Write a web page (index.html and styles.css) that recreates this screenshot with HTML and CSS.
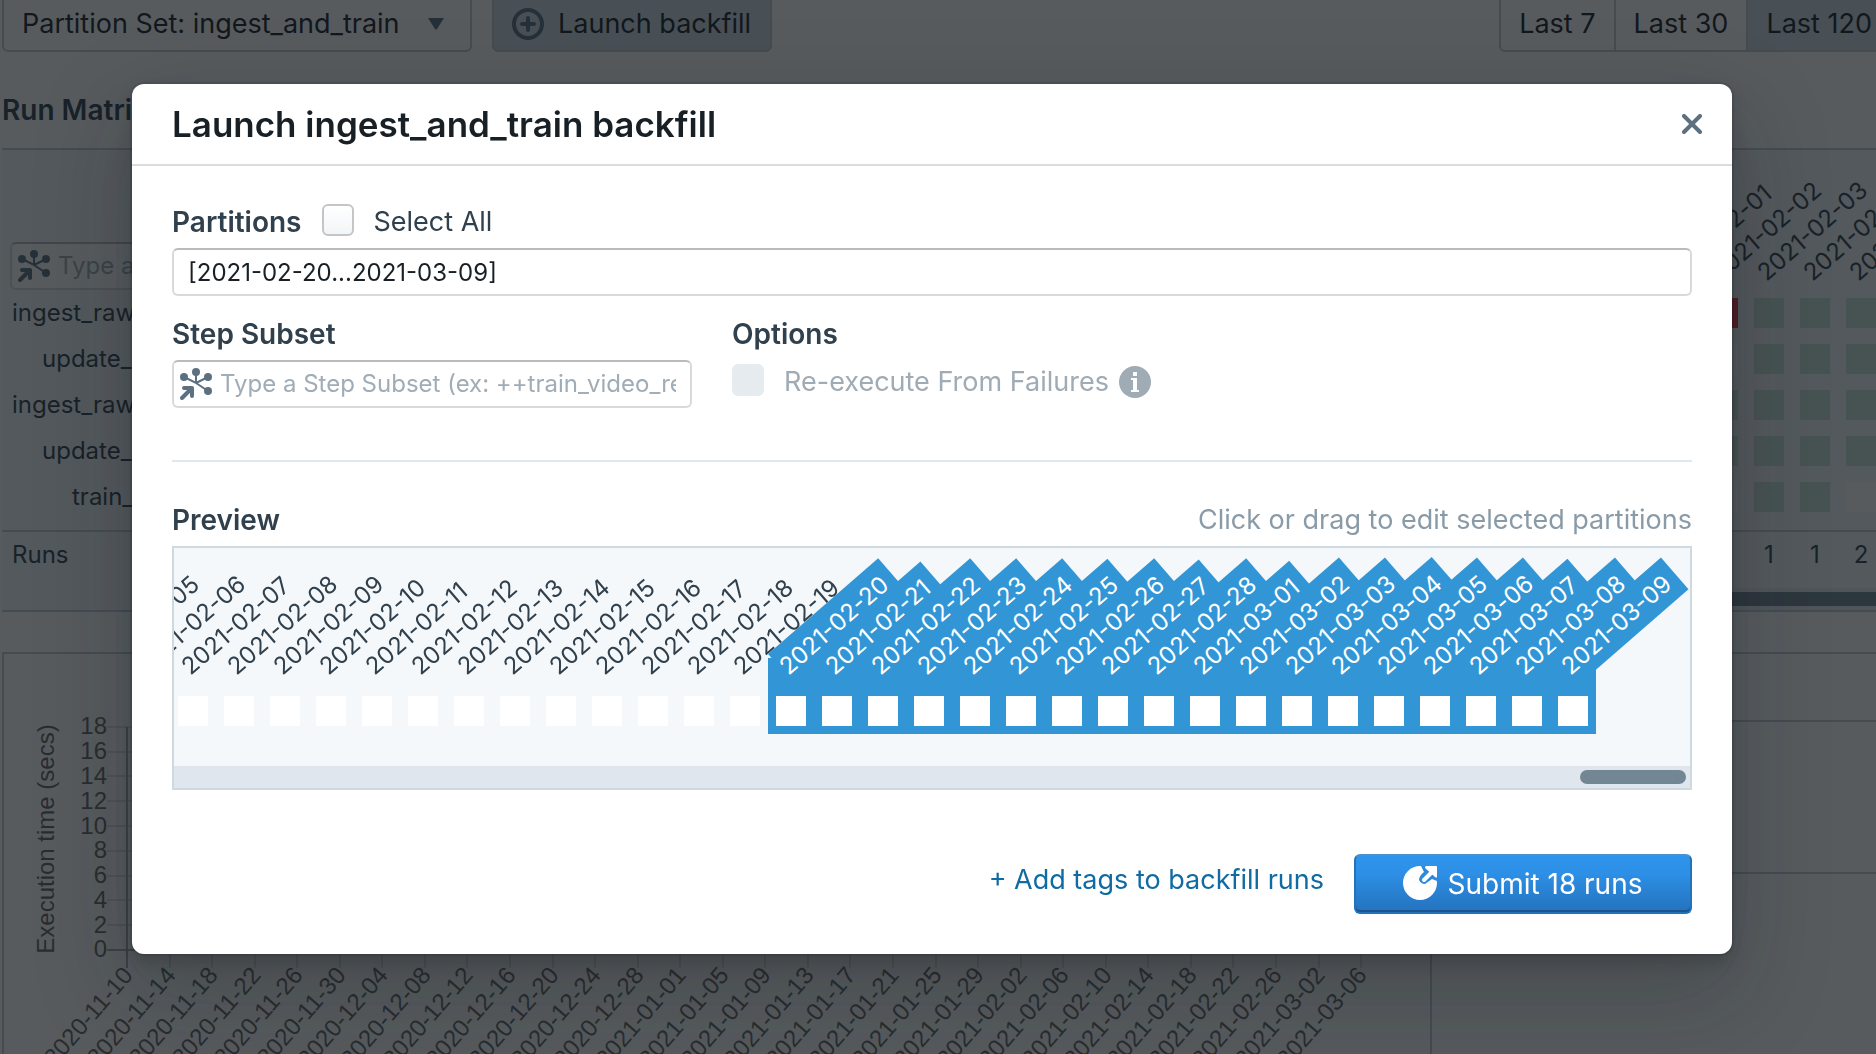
FILE: index.html
```html
<!DOCTYPE html>
<html lang="en">
<head>
<meta charset="utf-8">
<title>Launch ingest_and_train backfill</title>
<link rel="stylesheet" href="styles.css">
</head>
<body>
<main class="page">
  <div class="toolbar">
    <button class="btn btn-select" type="button">Partition Set: ingest_and_train
      <svg width="16" height="12" viewBox="0 0 16 12"><path d="M0 0h16L9 11q-1 1-2 0z" fill="#5c7080"/></svg>
    </button>
    <button class="btn btn-launch active" type="button">
      <svg width="32" height="32" viewBox="0 0 32 32" fill="none" stroke="#5c7080" stroke-width="4"><circle cx="16" cy="16" r="14"/><path d="M16 10v12M10 16h12" stroke-linecap="round"/></svg>
      Launch backfill
    </button>
    <div class="range">
      <button class="btn" type="button">Last 7</button>
      <button class="btn" type="button">Last 30</button>
      <button class="btn active" type="button">Last 120</button>
    </div>
  </div>

  <h2 class="section-title">Run Matrix</h2>
  <section class="matrix">
    <div class="matrix-body">
      <div class="steps">
        <label class="step-input">
          <svg class="op-icon" width="32" height="32" viewBox="0 0 32 32"><use href="#op"/></svg>
          <input type="text" placeholder="Type a Step Subset" aria-label="Step subset">
        </label>
        <div class="step">ingest_raw</div>
        <div class="step indent-1">update_</div>
        <div class="step">ingest_raw</div>
        <div class="step indent-1">update_</div>
        <div class="step indent-2">train_</div>
      </div>
      <div class="columns">
        <div class="column"><span class="tilt">2021-02-01</span><i class="cell ok"></i><i class="cell ok"></i><i class="cell ok"></i><i class="cell ok"></i><i class="cell ok"></i></div>
        <div class="column"><span class="tilt">2021-02-02</span><i class="cell fail"></i><i class="cell"></i><i class="cell ok"></i><i class="cell ok"></i><i class="cell"></i></div>
        <div class="column"><span class="tilt">2021-02-03</span><i class="cell ok"></i><i class="cell ok"></i><i class="cell ok"></i><i class="cell ok"></i><i class="cell ok"></i></div>
        <div class="column"><span class="tilt">2021-02-04</span><i class="cell ok"></i><i class="cell ok"></i><i class="cell ok"></i><i class="cell ok"></i><i class="cell ok"></i></div>
        <div class="column"><span class="tilt">2021-02-05</span><i class="cell ok"></i><i class="cell ok"></i><i class="cell ok"></i><i class="cell ok"></i><i class="cell"></i></div>
      </div>
    </div>
    <div class="matrix-runs">
      <div class="runs-label">Runs</div>
      <div class="run-counts"><span>1</span><span>1</span><span>2</span></div>
    </div>
    <div class="matrix-scroll"><div class="matrix-thumb"></div></div>
  </section>

  <section class="lower">
    <div class="chart">
      <svg width="1428" height="400" viewBox="0 0 1428 400">
        <g stroke="#e0e0e0" stroke-width="2">
          <path d="M103 73H1384M103 98H1384M103 122H1384M103 147H1384M103 172H1384M103 197H1384M103 222H1384M103 246H1384M103 271H1384"/>
          <path d="M166 73V314M208 73V314M251 73V314M293 73V314M336 73V314M378 73V314M421 73V314M463 73V314M506 73V314M549 73V314M591 73V314M634 73V314M676 73V314M719 73V314M761 73V314M804 73V314M846 73V314M889 73V314M932 73V314M974 73V314M1017 73V314M1059 73V314M1102 73V314M1144 73V314M1187 73V314M1229 73V314M1272 73V314M1315 73V314M1357 73V314"/>
        </g>
        <path d="M123 73V314M103 296H1384" stroke="#aaa" stroke-width="2"/>
        <text class="axis" text-anchor="middle" transform="translate(50 185) rotate(-90)">Execution time (secs)</text>
        <g class="axis" text-anchor="end">
          <text x="103" y="80">18</text><text x="103" y="105">16</text><text x="103" y="130">14</text><text x="103" y="155">12</text><text x="103" y="180">10</text><text x="103" y="204">8</text><text x="103" y="229">6</text><text x="103" y="254">4</text><text x="103" y="279">2</text><text x="103" y="303">0</text>
        </g>
        <g class="axis" text-anchor="end">
          <text transform="translate(130 322) rotate(-49)">2020-11-10</text>
          <text transform="translate(173 322) rotate(-49)">2020-11-14</text>
          <text transform="translate(215 322) rotate(-49)">2020-11-18</text>
          <text transform="translate(258 322) rotate(-49)">2020-11-22</text>
          <text transform="translate(300 322) rotate(-49)">2020-11-26</text>
          <text transform="translate(343 322) rotate(-49)">2020-11-30</text>
          <text transform="translate(385 322) rotate(-49)">2020-12-04</text>
          <text transform="translate(428 322) rotate(-49)">2020-12-08</text>
          <text transform="translate(470 322) rotate(-49)">2020-12-12</text>
          <text transform="translate(513 322) rotate(-49)">2020-12-16</text>
          <text transform="translate(556 322) rotate(-49)">2020-12-20</text>
          <text transform="translate(598 322) rotate(-49)">2020-12-24</text>
          <text transform="translate(641 322) rotate(-49)">2020-12-28</text>
          <text transform="translate(683 322) rotate(-49)">2021-01-01</text>
          <text transform="translate(726 322) rotate(-49)">2021-01-05</text>
          <text transform="translate(768 322) rotate(-49)">2021-01-09</text>
          <text transform="translate(811 322) rotate(-49)">2021-01-13</text>
          <text transform="translate(853 322) rotate(-49)">2021-01-17</text>
          <text transform="translate(896 322) rotate(-49)">2021-01-21</text>
          <text transform="translate(939 322) rotate(-49)">2021-01-25</text>
          <text transform="translate(981 322) rotate(-49)">2021-01-29</text>
          <text transform="translate(1024 322) rotate(-49)">2021-02-02</text>
          <text transform="translate(1066 322) rotate(-49)">2021-02-06</text>
          <text transform="translate(1109 322) rotate(-49)">2021-02-10</text>
          <text transform="translate(1151 322) rotate(-49)">2021-02-14</text>
          <text transform="translate(1194 322) rotate(-49)">2021-02-18</text>
          <text transform="translate(1236 322) rotate(-49)">2021-02-22</text>
          <text transform="translate(1279 322) rotate(-49)">2021-02-26</text>
          <text transform="translate(1322 322) rotate(-49)">2021-03-02</text>
          <text transform="translate(1364 322) rotate(-49)">2021-03-06</text>
        </g>
      </svg>
    </div>
    <div class="side"><div class="side-head"></div><div class="side-row"></div></div>
  </section>
</main>

<div class="overlay">
  <div class="dialog" role="dialog" aria-labelledby="dialog-title">
    <header class="dialog-head">
      <h1 id="dialog-title">Launch ingest_and_train backfill</h1>
      <button class="close" type="button" aria-label="Close">
        <svg width="20" height="20" viewBox="0 0 20 20"><path d="M2 2l16 16M18 2L2 18" stroke="#5c7080" stroke-width="4" stroke-linecap="round"/></svg>
      </button>
    </header>
    <form class="dialog-body">
      <div class="partitions-row">
        <label class="heading" for="partitions">Partitions</label>
        <label class="check"><input type="checkbox">Select All</label>
      </div>
      <input class="text-input" id="partitions" type="text" value="[2021-02-20...2021-03-09]">
      <div class="fields">
        <div class="field">
          <label class="heading" for="subset">Step Subset</label>
          <div class="step-input">
            <svg class="op-icon" width="32" height="32" viewBox="0 0 32 32">
              <g id="op" fill="none" stroke="#5c7080">
                <path d="M16 4v11L4 9M16 15l12-6M16 15l12 8" stroke-width="2"/>
                <g fill="#5c7080" stroke="none"><circle cx="16" cy="4" r="4"/><circle cx="4" cy="9" r="4"/><circle cx="28" cy="9" r="4"/><circle cx="28" cy="23" r="4"/></g>
                <path d="M2 30L11 21" stroke-width="4" stroke-linecap="round"/>
                <path d="M4 20h8v8" stroke-width="4" stroke-linecap="round" stroke-linejoin="round"/>
              </g>
            </svg>
            <input id="subset" type="text" placeholder="Type a Step Subset (ex: ++train_video_retrain)">
          </div>
        </div>
        <div class="field">
          <span class="heading">Options</span>
          <div class="option">
            <label class="check disabled"><input type="checkbox" disabled>Re-execute From Failures</label>
            <svg width="32" height="32" viewBox="0 0 32 32"><circle cx="16" cy="16" r="16" fill="#9fabb5"/><path d="M14 6h4v4h-4zM12 12h6v12h2v2h-8v-2h2V14h-2z" fill="#fff"/></svg>
          </div>
        </div>
      </div>
      <div class="preview-head">
        <span class="heading">Preview</span>
        <span class="hint">Click or drag to edit selected partitions</span>
      </div>
      <div class="preview">
        <div class="days">
          <div class="day"><span class="tilt">2021-02-05</span><i class="cell"></i></div>
          <div class="day"><span class="tilt">2021-02-06</span><i class="cell"></i></div>
          <div class="day"><span class="tilt">2021-02-07</span><i class="cell"></i></div>
          <div class="day"><span class="tilt">2021-02-08</span><i class="cell"></i></div>
          <div class="day"><span class="tilt">2021-02-09</span><i class="cell"></i></div>
          <div class="day"><span class="tilt">2021-02-10</span><i class="cell"></i></div>
          <div class="day"><span class="tilt">2021-02-11</span><i class="cell"></i></div>
          <div class="day"><span class="tilt">2021-02-12</span><i class="cell"></i></div>
          <div class="day"><span class="tilt">2021-02-13</span><i class="cell"></i></div>
          <div class="day"><span class="tilt">2021-02-14</span><i class="cell"></i></div>
          <div class="day"><span class="tilt">2021-02-15</span><i class="cell"></i></div>
          <div class="day"><span class="tilt">2021-02-16</span><i class="cell"></i></div>
          <div class="day"><span class="tilt">2021-02-17</span><i class="cell"></i></div>
          <div class="day"><span class="tilt">2021-02-18</span><i class="cell"></i></div>
          <div class="day"><span class="tilt">2021-02-19</span><i class="cell"></i></div>
          <div class="day selected"><span class="tilt">2021-02-20</span><i class="cell"></i></div>
          <div class="day selected"><span class="tilt">2021-02-21</span><i class="cell"></i></div>
          <div class="day selected"><span class="tilt">2021-02-22</span><i class="cell"></i></div>
          <div class="day selected"><span class="tilt">2021-02-23</span><i class="cell"></i></div>
          <div class="day selected"><span class="tilt">2021-02-24</span><i class="cell"></i></div>
          <div class="day selected"><span class="tilt">2021-02-25</span><i class="cell"></i></div>
          <div class="day selected"><span class="tilt">2021-02-26</span><i class="cell"></i></div>
          <div class="day selected"><span class="tilt">2021-02-27</span><i class="cell"></i></div>
          <div class="day selected"><span class="tilt">2021-02-28</span><i class="cell"></i></div>
          <div class="day selected"><span class="tilt">2021-03-01</span><i class="cell"></i></div>
          <div class="day selected"><span class="tilt">2021-03-02</span><i class="cell"></i></div>
          <div class="day selected"><span class="tilt">2021-03-03</span><i class="cell"></i></div>
          <div class="day selected"><span class="tilt">2021-03-04</span><i class="cell"></i></div>
          <div class="day selected"><span class="tilt">2021-03-05</span><i class="cell"></i></div>
          <div class="day selected"><span class="tilt">2021-03-06</span><i class="cell"></i></div>
          <div class="day selected"><span class="tilt">2021-03-07</span><i class="cell"></i></div>
          <div class="day selected"><span class="tilt">2021-03-08</span><i class="cell"></i></div>
          <div class="day selected"><span class="tilt">2021-03-09</span><i class="cell"></i></div>
        </div>
        <div class="scroll"><div class="thumb"></div></div>
      </div>
      <footer class="actions">
        <a class="add-tags" href="#">+ Add tags to backfill runs</a>
        <button class="submit" type="submit">
          <svg width="34" height="34" viewBox="0 0 34 34"><circle cx="17" cy="17" r="17" fill="#fff"/><path d="M18 0H34V15L29 13L22 18Q18 18 16 14Q16 10 21 6Z" fill="#2b8ae0"/><path d="M21 14L29 6" stroke="#fff" stroke-width="4" stroke-linecap="round"/><path d="M23 0H33Q34 0 34 1V11Q33 12 32 11L22 2Q22 0 23 0Z" fill="#fff"/></svg>
          Submit 18 runs
        </button>
      </footer>
    </form>
  </div>
</div>
</body>
</html>
```
FILE: styles.css
```css
* { box-sizing: border-box; }
body {
  margin: 0;
  height: 100vh;
  overflow: hidden;
  background: #fff;
  color: #182026;
  font: 27px/36px Inter, "Liberation Sans", sans-serif;
}
h1, h2 { margin: 0; }
button, input { font: inherit; color: inherit; margin: 0; }

/* Page behind the dialog */
.page { padding-left: 2px; }
.toolbar { display: flex; gap: 20px; margin-top: -8px; }
.btn {
  display: flex;
  align-items: center;
  height: 60px;
  padding: 4px 18px 0;
  border: 2px solid #c3c8cc;
  border-radius: 6px;
  background: #fff;
  white-space: nowrap;
}
.btn.active { background: #ced9e0; }
.btn-select { width: 470px; justify-content: space-between; padding-right: 26px; }
.btn-launch { width: 280px; gap: 14px; }
.range { display: flex; margin-left: auto; margin-right: -16px; }
.range .btn { border-radius: 0; margin-left: -2px; }
.range .btn:first-child { border-bottom-left-radius: 6px; }
.section-title { margin: 40px 0 20px; font-size: 28px; line-height: 36px; font-weight: 600; color: #30404d; }

.matrix { background: #f5f8fa; border: solid #bfccd6; border-width: 2px 0; color: #30404d; font-size: 24px; }
.matrix-body { display: flex; justify-content: space-between; height: 380px; overflow: hidden; }
.steps { width: 300px; padding: 92px 0 0 8px; }
.step { height: 46px; line-height: 46px; padding-left: 2px; }
.indent-1 { padding-left: 32px; }
.indent-2 { padding-left: 62px; }
.columns { display: flex; padding-top: 110px; margin-right: -8px; }
.column { width: 46px; }
.column .tilt { margin-bottom: -4px; }
.column .cell { margin-bottom: 16px; }
.ok.cell { background: #c8e3d8; }
.fail.cell { background: #e8343c; }
.matrix-runs { display: flex; justify-content: space-between; height: 58px; border-top: 2px solid #bfccd6; line-height: 46px; }
.runs-label { padding-left: 10px; }
.run-counts { display: flex; margin-right: -8px; }
.run-counts span { width: 46px; text-align: center; }
.matrix-scroll { height: 22px; margin-left: 300px; padding: 4px 0; background: #e6ebf0; }
.matrix-thumb { height: 14px; background: #738694; }

.lower { display: flex; margin-top: 40px; }
.chart { flex: 1; min-width: 0; border: 2px solid #bfccd6; }
.chart svg { display: block; }
.axis { font: 24px "Liberation Sans", sans-serif; fill: #666; }
.side { flex: 0 0 444px; border-top: 2px solid #bfccd6; }
.side-head { height: 68px; border-bottom: 2px solid #bfccd6; }
.side-row { height: 152px; border-bottom: 2px solid #bfccd6; }

/* Tilted date labels and status cells, shared by matrix and preview */
.tilt {
  display: block;
  width: max-content;
  padding: 5px 10px 3px 1px;
  font-size: 24px;
  line-height: 34px;
  color: #30404d;
  white-space: nowrap;
  transform: rotate(-41deg);
  transform-origin: top left;
}
.cell { display: block; width: 30px; height: 30px; margin: 0 8px; background: #fff; }

/* Dialog */
.overlay {
  position: fixed;
  inset: 0;
  display: flex;
  align-items: flex-start;
  padding: 84px 144px 0 132px;
  background: rgba(16, 22, 26, 0.7);
}
.dialog {
  flex: 1;
  min-width: 0;
  border-radius: 12px;
  background: #fff;
  color: #30404d;
  box-shadow: 0 0 0 2px rgba(16, 22, 26, 0.1), 0 8px 16px rgba(16, 22, 26, 0.2), 0 36px 92px 12px rgba(16, 22, 26, 0.2);
}
.dialog-head {
  display: flex;
  align-items: center;
  justify-content: space-between;
  height: 82px;
  padding: 0 20px 0 40px;
  border-bottom: 2px solid #dbdcdd;
}
.dialog-head h1 { font-size: 35px; line-height: 40px; font-weight: 600; color: #182026; }
.close { display: flex; padding: 10px; border: 0; background: none; }
.dialog-body { padding: 38px 40px 40px; }
.heading { font-size: 28px; font-weight: 600; }
.partitions-row { display: flex; gap: 20px; margin-bottom: 8px; }
.check { display: flex; gap: 20px; }
.check input {
  appearance: none;
  width: 32px;
  height: 32px;
  border: 2px solid #c3c5c7;
  border-radius: 6px;
  background: linear-gradient(#fff, #f2f5f7);
}
.check.disabled { color: #9fabb5; }
.check.disabled input { border: 0; background: #e5ebee; }
.text-input, .step-input {
  display: flex;
  align-items: center;
  width: 100%;
  height: 48px;
  border: 2px solid #d8d9da;
  border-top-color: #b8babb;
  border-radius: 6px;
  background: #fff;
  font-size: 24px;
}
.text-input { padding: 0 14px; color: #182026; }
.step-input { gap: 8px; padding: 0 14px 0 6px; }
.step-input input { flex: 1; min-width: 0; padding: 0; border: 0; background: none; outline: 0; }
.step-input input::placeholder { color: #a0acb6; }
.op-icon { flex: none; }
.fields {
  display: grid;
  grid-template-columns: 520px 1fr;
  gap: 40px;
  padding: 20px 0 52px;
  border-bottom: 2px solid #e1e8ed;
}
.field .heading { display: block; margin-bottom: 8px; }
.option { display: flex; gap: 10px; padding-top: 4px; }
.option svg { margin-top: 2px; }
.preview-head { display: flex; justify-content: space-between; margin: 40px 0 8px; }
.hint { color: #8a9ba8; }
.preview { border: 2px solid #ced9e0; background: #f5f8fa; overflow: hidden; }
.days { display: flex; justify-content: flex-end; padding: 110px 94px 32px 0; }
.day { flex: none; width: 46px; padding-bottom: 8px; }
.day .tilt { margin-top: -4px; }
.selected, .selected .tilt { background: #3296d6; }
.selected .tilt { color: #fff; }
.scroll { display: flex; justify-content: flex-end; height: 22px; padding: 4px; background: #dfe6ed; }
.thumb { width: 106px; height: 14px; border-radius: 7px; background: #738694; }
.actions { display: flex; justify-content: flex-end; gap: 30px; margin-top: 64px; }
.add-tags { color: #106ba3; text-decoration: none; line-height: 52px; }
.submit {
  display: flex;
  align-items: center;
  justify-content: center;
  gap: 10px;
  width: 338px;
  height: 60px;
  border: 2px solid #2273b8;
  border-radius: 6px;
  border-top-color: #4a90cf;
  background: linear-gradient(#2d94ec, #2d90e6 30%, #2472bd);
  box-shadow: inset 0 -2px 0 #1b5590;
  color: #fff;
  font-size: 28px;
}
.submit svg { margin-bottom: 2px; }
```
